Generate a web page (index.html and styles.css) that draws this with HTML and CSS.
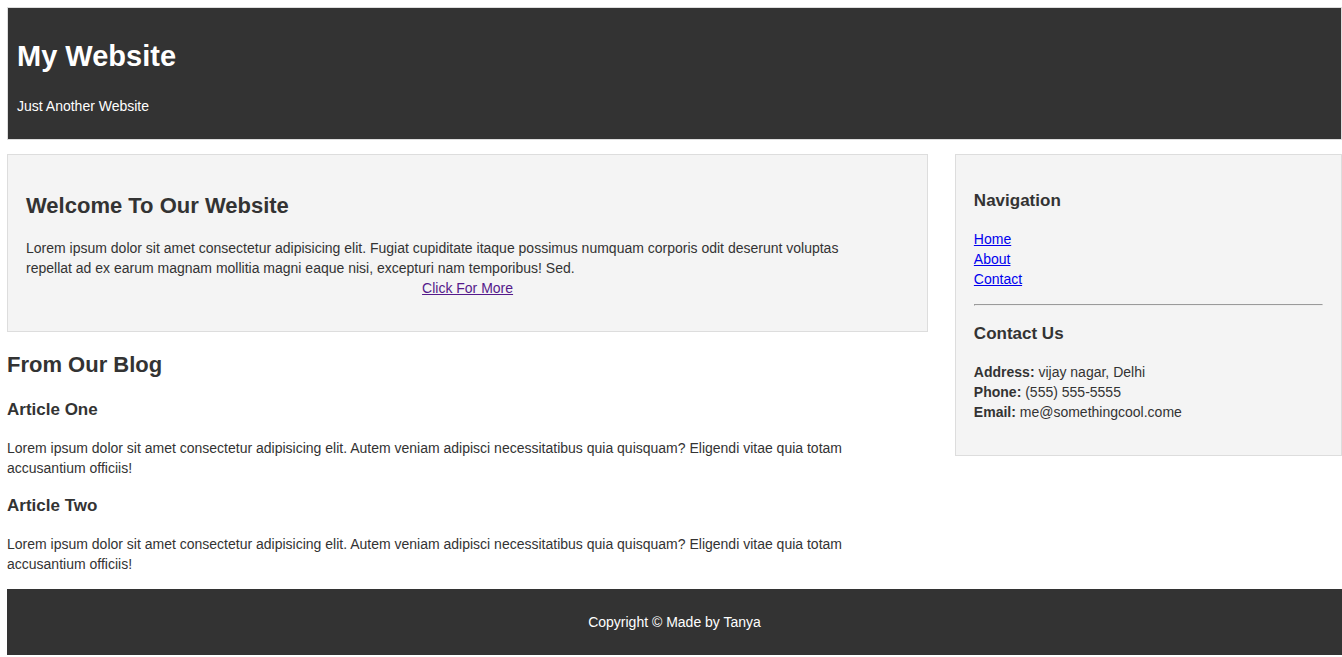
FILE: index.html
```html
<!DOCTYPE html>
<html lang="en">
<head>
<meta charset="utf-8">
<title>My Website</title>
<link rel="stylesheet" href="styles.css">
</head>
<body>
<header class="site-header">
  <h1>My Website</h1>
  <p>Just Another Website</p>
</header>
<div class="layout">
  <main class="main">
    <section class="welcome">
      <h2>Welcome To Our Website</h2>
      <p class="copy">Lorem ipsum dolor sit amet consectetur adipisicing elit. Fugiat cupiditate itaque possimus numquam corporis odit deserunt voluptas repellat ad ex earum magnam mollitia magni eaque nisi, excepturi nam temporibus! Sed.</p>
      <p class="more"><a href="#">Click For More</a></p>
    </section>
    <section class="blog">
      <h2>From Our Blog</h2>
      <article>
        <h3>Article One</h3>
        <p class="copy">Lorem ipsum dolor sit amet consectetur adipisicing elit. Autem veniam adipisci necessitatibus quia quisquam? Eligendi vitae quia totam accusantium officiis!</p>
      </article>
      <article>
        <h3>Article Two</h3>
        <p class="copy">Lorem ipsum dolor sit amet consectetur adipisicing elit. Autem veniam adipisci necessitatibus quia quisquam? Eligendi vitae quia totam accusantium officiis!</p>
      </article>
    </section>
  </main>
  <aside class="sidebar">
    <h3>Navigation</h3>
    <nav>
      <ul class="nav-list">
        <li><a href="#">Home</a></li>
        <li><a href="#">About</a></li>
        <li><a href="#">Contact</a></li>
      </ul>
    </nav>
    <hr>
    <h3>Contact Us</h3>
    <ul class="contact-list">
      <li><strong>Address:</strong> vijay nagar, Delhi</li>
      <li><strong>Phone:</strong> (555) 555-5555</li>
      <li><strong>Email:</strong> me@somethingcool.come</li>
    </ul>
  </aside>
</div>
<footer class="site-footer">
  <p>Copyright &copy; Made by Tanya</p>
</footer>
</body>
</html>
```
FILE: styles.css
```css
* {
  box-sizing: border-box;
}

body {
  margin: 7px 0 0 7px;
  background: #fff;
  color: #333;
  font-family: "Liberation Sans", Arial, sans-serif;
  font-size: 14px;
  line-height: 20px;
}

h1 {
  margin: 0 0 20px;
  font-size: 29px;
  line-height: 40px;
}

h2 {
  margin: 0 0 17px;
  font-size: 22px;
  line-height: 30px;
}

h3 {
  margin: 0 0 16px;
  font-size: 17px;
  line-height: 24px;
}

p {
  margin: 0;
}

a {
  color: #0000ee;
}

.site-header {
  padding: 28px 9px 23px;
  border: 1px solid #ddd;
  background: #333;
  color: #fff;
}

.layout {
  display: flex;
  align-items: flex-start;
  justify-content: space-between;
  margin-top: 14px;
}

.main {
  width: 69%;
}

.welcome {
  padding: 36px 18px 33px;
  border: 1px solid #ddd;
  background: #f4f4f4;
}

.copy {
  padding-right: 32px;
}

.more {
  text-align: center;
}

.more a {
  color: #551a8b;
}

.blog {
  padding: 18px 0 15px;
}

.blog h2 {
  margin-bottom: 18px;
}

.blog article + article {
  margin-top: 16px;
}

.sidebar {
  width: 29%;
  padding: 34px 18px 33px;
  border: 1px solid #ddd;
  background: #f4f4f4;
}

.nav-list,
.contact-list {
  margin: 0;
  padding: 0;
  list-style: none;
}

hr {
  margin: 15px 0 16px;
}

.site-footer {
  padding: 23px 10px;
  background: #333;
  color: #fff;
  text-align: center;
}
```
